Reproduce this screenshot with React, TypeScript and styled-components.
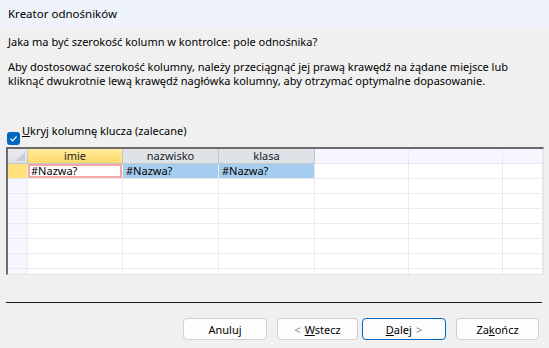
import styled, { createGlobalStyle, css } from "styled-components";

const GlobalStyle = createGlobalStyle`
  html, body {
    margin: 0;
    padding: 0;
    background: #f0f0f0;
  }
  body {
    font-family: "Noto Sans", "Open Sans", sans-serif;
    font-size: 11px;
    color: #000;
  }
`;

const Window = styled.div`
  width: 549px;
  height: 348px;
  display: flex;
  flex-direction: column;
  background: #f0f0f0;
  overflow: hidden;
`;

const TitleBar = styled.div`
  height: 27px;
  display: flex;
  align-items: center;
  padding-left: 8px;
  background: #eef3f9;
  font-size: 11.5px;
`;

const Body = styled.div`
  display: flex;
  flex-direction: column;
  padding: 0 6px 0 6px;
`;

const Text = styled.p`
  margin: 0;
  padding-left: 2px;
  line-height: 14px;
`;

const Question = styled(Text)`
  margin-top: 8px;
`;

const Hint = styled(Text)`
  margin-top: 11px;
`;

const CheckRow = styled.label`
  display: flex;
  align-items: flex-start;
  margin-top: 38px;
  height: 21px;
`;

const Box = styled.span`
  width: 13px;
  height: 13px;
  margin: 6px 0 0 1px;
  border-radius: 3px;
  background: #0067c0;
  display: flex;
  align-items: center;
  justify-content: center;
`;

const CheckLabel = styled.span`
  margin-left: 2px;
  line-height: 13px;
  margin-top: -2px;
`;

const Ul = styled.span`
  text-decoration: underline;
`;

const Sheet = styled.div`
  height: 128px;
  width: 538px;
  box-sizing: border-box;
  border-top: 2px solid #6b6b6b;
  border-left: 2px solid #6b6b6b;
  border-right: 1px solid #e3e3e3;
  border-bottom: 1px solid #e3e3e3;
  background: #fff;
  overflow: hidden;
  display: grid;
  grid-template-columns: 20px 95px 96px 96px 94px 94px 1fr;
  grid-auto-rows: 15px;
  font-size: 11px;
`;

type Kind = "corner" | "active" | "plain" | "blank" | "selector" | "activeSel" | "edit" | "sel" | "empty";

const cellColors: Record<Kind, ReturnType<typeof css>> = {
  corner: css`
    background: linear-gradient(#e9ebee, #dde1e6);
  `,
  active: css`
    background: linear-gradient(#ffeb9c, #fed96a);
  `,
  plain: css`
    background: #dfe3e8;
  `,
  blank: css`
    background: #f6f7fe;
  `,
  selector: css`
    background: #f6f7fe;
  `,
  activeSel: css`
    background: #ffe07a;
  `,
  edit: css`
    background: #fff;
    box-shadow: inset 0 0 0 2px #f4a7a7;
  `,
  sel: css`
    background: #a6cdef;
  `,
  empty: css`
    background: #fff;
  `,
};

const Cell = styled.div<{ $kind: Kind; $head?: boolean }>`
  position: relative;
  box-sizing: border-box;
  border-right: 1px solid ${(p) => (p.$head && p.$kind !== "blank" ? "#c4c8cc" : "#ebebeb")};
  border-bottom: 1px solid ${(p) => (p.$head && p.$kind !== "blank" ? "#c4c8cc" : "#ebebeb")};
  line-height: 14px;
  white-space: nowrap;
  overflow: hidden;
  text-align: ${(p) => (p.$head ? "center" : "left")};
  color: ${(p) => (p.$head ? "#222" : "#000")};
  padding-left: ${(p) => (p.$head ? "0" : "3px")};
  ${(p) => cellColors[p.$kind]}
`;

const Corner = styled.span`
  position: absolute;
  right: 2px;
  bottom: 2px;
  width: 0;
  height: 0;
  border-left: 9px solid transparent;
  border-bottom: 9px solid #c9ccd1;
`;

const Separator = styled.div`
  margin-top: 27px;
  height: 1px;
  width: 536px;
  background: #1e1e1e;
`;

const Buttons = styled.div`
  display: flex;
  justify-content: flex-end;
  gap: 10px;
  margin-top: 15px;
  padding-right: 4px;
`;

const NavPair = styled.div`
  display: flex;
  gap: 4px;
`;

const Button = styled.button<{ $primary?: boolean; $w?: number }>`
  width: ${(p) => p.$w ?? 84}px;
  height: 22px;
  box-sizing: border-box;
  border-radius: 4px;
  border: 1px solid ${(p) => (p.$primary ? "#0067c0" : "#d0d0d0")};
  background: #fdfdfd;
  font-family: "Noto Sans", "Open Sans", sans-serif;
  font-size: 11px;
  color: #000;
  padding: 0;
  display: flex;
  align-items: center;
  justify-content: center;
  gap: 4px;
`;

const Arrow = styled.span`
  color: #8a8a8a;
`;

const headers: { label: string; kind: Kind }[] = [
  { label: "", kind: "corner" },
  { label: "imie", kind: "active" },
  { label: "nazwisko", kind: "plain" },
  { label: "klasa", kind: "plain" },
  { label: "", kind: "blank" },
  { label: "", kind: "blank" },
  { label: "", kind: "blank" },
];

const firstRow: { label: string; kind: Kind }[] = [
  { label: "", kind: "activeSel" },
  { label: "#Nazwa?", kind: "edit" },
  { label: "#Nazwa?", kind: "sel" },
  { label: "#Nazwa?", kind: "sel" },
  { label: "", kind: "empty" },
  { label: "", kind: "empty" },
  { label: "", kind: "empty" },
];

export default function App() {
  const emptyRows = Array.from({ length: 7 });
  return (
    <Window>
      <GlobalStyle />
      <TitleBar>Kreator odnośników</TitleBar>
      <Body>
        <Question>Jaka ma być szerokość kolumn w kontrolce: pole odnośnika?</Question>
        <Hint>
          Aby dostosować szerokość kolumny, należy przeciągnąć jej prawą krawędź na żądane miejsce lub
          <br />
          kliknąć dwukrotnie lewą krawędź nagłówka kolumny, aby otrzymać optymalne dopasowanie.
        </Hint>
        <CheckRow>
          <Box>
            <svg width="9" height="9" viewBox="0 0 9 9">
              <path d="M1.5 4.8 L3.6 6.8 L7.6 2.3" fill="none" stroke="#fff" strokeWidth="1.2" />
            </svg>
          </Box>
          <CheckLabel>
            <Ul>U</Ul>kryj kolumnę klucza (zalecane)
          </CheckLabel>
        </CheckRow>
        <Sheet>
          {headers.map((h, i) => (
            <Cell key={`h${i}`} $kind={h.kind} $head>
              {h.kind === "corner" && <Corner />}
              {h.label}
            </Cell>
          ))}
          {firstRow.map((c, i) => (
            <Cell key={`r${i}`} $kind={c.kind}>
              {c.label}
            </Cell>
          ))}
          {emptyRows.map((_, r) =>
            headers.map((_, i) => (
              <Cell key={`e${r}-${i}`} $kind={i === 0 ? "selector" : "empty"} />
            ))
          )}
        </Sheet>
        <Separator />
        <Buttons>
          <Button>Anuluj</Button>
          <NavPair>
            <Button $w={81}>
              <Arrow>&lt;</Arrow>
              <span>
                <Ul>W</Ul>stecz
              </span>
            </Button>
            <Button $primary>
              <span>
                <Ul>D</Ul>alej
              </span>
              <Arrow>&gt;</Arrow>
            </Button>
          </NavPair>
          <Button $w={83}>
            <span>
              Za<Ul>k</Ul>ończ
            </span>
          </Button>
        </Buttons>
      </Body>
    </Window>
  );
}
